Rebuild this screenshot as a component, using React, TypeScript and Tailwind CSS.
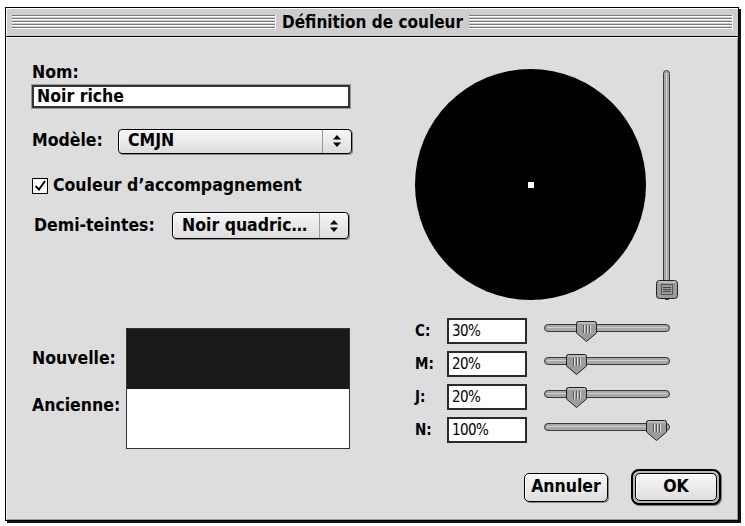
import React from "react";

const FONT = "[font-family:'DejaVu_Sans_Condensed','DejaVu_Sans',sans-serif] [font-stretch:condensed]";

function Arrows() {
  return (
    <svg width="10" height="14" viewBox="0 0 10 14">
      <path d="M5 1 L9 5.5 L1 5.5 Z" fill="#000" />
      <path d="M5 13 L9 8.5 L1 8.5 Z" fill="#000" />
    </svg>
  );
}

function Popup({ label, w, h }: { label: string; w: string; h: string }) {
  return (
    <div
      className={`${w} ${h} flex items-stretch rounded-[4px] border border-black bg-[linear-gradient(180deg,#f7f7f7,#dcdcdc)] shadow-[1px_1px_0_#8a8a8a,inset_1px_1px_0_#fff]`}
    >
      <div className="flex-1 flex items-center pl-[9px] text-[17.5px] font-bold leading-none text-black">
        {label}
      </div>
      <div className="w-[29px] flex items-center justify-center border-l border-[#9a9a9a]">
        <Arrows />
      </div>
    </div>
  );
}

function HSlider({ pos }: { pos: number }) {
  return (
    <svg width="127" height="26" viewBox="0 0 127 26" className="block">
      <rect x="0.5" y="6.5" width="125" height="7" rx="3.5" fill="#a8a8a8" stroke="#3a3a3a" />
      <line x1="3" y1="9.5" x2="123" y2="9.5" stroke="#d0d0d0" />
      <g transform={`translate(${pos},0)`}>
        <path
          d="M2.5 3.5 H18.5 Q20.5 3.5 20.5 5.5 V15 L10.5 23.5 L0.5 15 V5.5 Q0.5 3.5 2.5 3.5 Z"
          fill="#9c9c9c"
          stroke="#222"
        />
        <path d="M2 5 H19" stroke="#d8d8d8" />
        <line x1="7.5" y1="7" x2="7.5" y2="15" stroke="#555" />
        <line x1="10.5" y1="7" x2="10.5" y2="15" stroke="#555" />
        <line x1="13.5" y1="7" x2="13.5" y2="15" stroke="#555" />
        <line x1="8.5" y1="7" x2="8.5" y2="15" stroke="#ddd" />
        <line x1="11.5" y1="7" x2="11.5" y2="15" stroke="#ddd" />
        <line x1="14.5" y1="7" x2="14.5" y2="15" stroke="#ddd" />
      </g>
    </svg>
  );
}

function VSlider() {
  return (
    <svg width="24" height="233" viewBox="0 0 24 233" className="block">
      <rect x="7.5" y="1.5" width="6" height="222" rx="3" fill="#a8a8a8" stroke="#3a3a3a" />
      <line x1="10.5" y1="4" x2="10.5" y2="220" stroke="#d0d0d0" />
      <rect x="9" y="228" width="4" height="3" fill="#444" />
      <rect x="0.5" y="211.5" width="21" height="18" rx="3" fill="#9c9c9c" stroke="#222" />
      <path d="M2 213 H20" stroke="#d8d8d8" />
      <rect x="5.5" y="215.5" width="11" height="10" fill="none" stroke="#555" />
      <line x1="7" y1="218.5" x2="15" y2="218.5" stroke="#444" />
      <line x1="7" y1="220.5" x2="15" y2="220.5" stroke="#444" />
      <line x1="7" y1="222.5" x2="15" y2="222.5" stroke="#444" />
    </svg>
  );
}

function Row({ label, value, pos }: { label: string; value: string; pos: number }) {
  return (
    <div className="h-[26px] flex items-center">
      <div className="w-[32px] text-[15px] font-bold leading-none text-black">{label}</div>
      <div className="w-[80px] h-[26px] bg-white border-2 border-[#2a2a2a] flex items-center pl-[3px] text-[15px] font-medium leading-none text-black [font-family:'DejaVu_Sans','Liberation_Sans',sans-serif] tracking-[-0.6px]">
        {value}
      </div>
      <div className="ml-[17px]">
        <HSlider pos={pos} />
      </div>
    </div>
  );
}

export default function App() {
  return (
    <div className={`w-[745px] h-[526px] bg-white pt-[7px] pl-[5px] overflow-hidden ${FONT}`}>
      <div className="w-[734px] h-[514px] border border-black shadow-[2px_2px_0_#111] bg-[#dddddd] flex flex-col">
        {/* Title bar */}
        <div className="h-[29px] shrink-0 border-b border-black bg-[#cecece] shadow-[inset_1px_1px_0_#fff] flex items-center pl-[6px] pr-[5px]">
          <div className="flex-1 h-[15px] border-r border-[#fff] bg-[repeating-linear-gradient(180deg,#7a7a7a_0px,#7a7a7a_1px,#ffffff_1px,#ffffff_2px,#cecece_2px,#cecece_3px)]" />
          <div className="px-[6px] text-[17px] font-bold leading-none text-black">Définition de couleur</div>
          <div className="flex-1 h-[15px] border-r border-[#fff] bg-[repeating-linear-gradient(180deg,#7a7a7a_0px,#7a7a7a_1px,#ffffff_1px,#ffffff_2px,#cecece_2px,#cecece_3px)]" />
        </div>

        {/* Content */}
        <div className="flex-1 flex shadow-[inset_1px_1px_0_#f4f4f4,inset_-1px_-1px_0_#9a9a9a]">
          {/* Left column */}
          <div className="ml-[26px] w-[330px] flex flex-col">
            <div className="mt-[26px] h-[18px] text-[17.5px] font-bold leading-[18px] text-black">Nom:</div>
            <div className="mt-[4px] w-[318px] h-[23px] bg-white border-2 border-[#333] shadow-[0_0_0_1px_#9a9a9a] flex items-center pl-[3px] text-[17.5px] font-bold leading-none text-black">
              Noir riche
            </div>
            <div className="mt-[20px] h-[26px] flex items-center">
              <div className="w-[86px] text-[17.5px] font-bold leading-none text-black">Modèle:</div>
              <Popup label="CMJN" w="w-[234px]" h="h-[25px]" />
            </div>
            <div className="mt-[24px] h-[16px] flex items-center">
              <div className="w-[16px] h-[16px] bg-white border border-black flex items-center justify-center">
                <svg width="14" height="14" viewBox="0 0 14 14">
                  <path d="M2.5 7 L6 10.5 L12 2" fill="none" stroke="#000" strokeWidth="2" />
                </svg>
              </div>
              <div className="ml-[5px] text-[17.5px] font-bold leading-none text-black">Couleur d’accompagnement</div>
            </div>
            <div className="mt-[18px] h-[27px] flex items-center">
              <div className="ml-[2px] w-[138px] text-[17.5px] font-bold leading-none text-black">Demi-teintes:</div>
              <Popup label="Noir quadric…" w="w-[177px]" h="h-[27px]" />
            </div>
            <div className="mt-[89px] h-[121px] flex">
              <div className="w-[94px] flex flex-col">
                <div className="mt-[21px] h-[18px] text-[17.5px] font-bold leading-[18px] text-black">Nouvelle:</div>
                <div className="mt-[29px] h-[18px] text-[17.5px] font-bold leading-[18px] text-black">Ancienne:</div>
              </div>
              <div className="w-[224px] h-[121px] border border-[#333] flex flex-col">
                <div className="h-[60px] bg-[#1a1a1a]" />
                <div className="flex-1 bg-white" />
              </div>
            </div>
          </div>

          {/* Right column */}
          <div className="ml-[53px] flex-1 flex flex-col">
            <div className="mt-[32px] flex">
              <div className="w-[231px] h-[231px] rounded-full bg-black flex items-center justify-center">
                <div className="w-[6px] h-[6px] bg-white" />
              </div>
              <div className="ml-[10px]">
                <VSlider />
              </div>
            </div>
            <div className="mt-[16px] flex flex-col gap-[7px]">
              <Row label="C:" value="30%" pos={32} />
              <Row label="M:" value="20%" pos={22} />
              <Row label="J:" value="20%" pos={22} />
              <Row label="N:" value="100%" pos={102} />
            </div>
            <div className="mt-[26px] flex items-center justify-end pr-[17px]">
              <div className="w-[84px] h-[29px] rounded-[5px] border border-black bg-[linear-gradient(180deg,#f8f8f8,#dedede)] shadow-[1px_1px_0_#888,inset_1px_1px_0_#fff] flex items-center justify-center text-[17.5px] font-bold leading-none text-black">
                Annuler
              </div>
              <div className="ml-[23px] w-[90px] h-[36px] rounded-[8px] border-2 border-black bg-[#b8b8b8] shadow-[1px_1px_0_#777] p-[2px] flex">
                <div className="flex-1 rounded-[5px] border border-black bg-[linear-gradient(180deg,#f8f8f8,#dedede)] shadow-[inset_1px_1px_0_#fff] flex items-center justify-center text-[17.5px] font-bold leading-none text-black">
                  OK
                </div>
              </div>
            </div>
          </div>
        </div>
      </div>
    </div>
  );
}
